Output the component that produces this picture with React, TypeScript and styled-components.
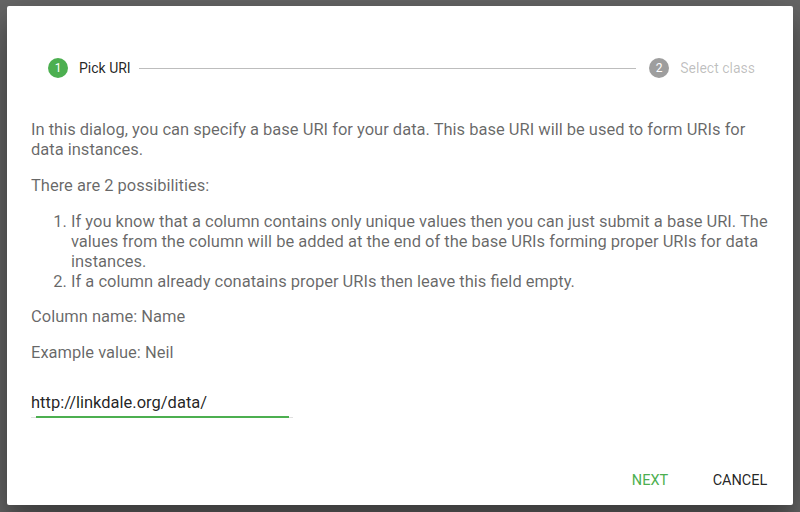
import { useEffect, useRef } from "react";
import styled, { createGlobalStyle } from "styled-components";

const GlobalStyle = createGlobalStyle`
  body {
    margin: 0;
    font-family: Roboto, "Liberation Sans", sans-serif;
  }
`;

const Backdrop = styled.div`
  width: 800px;
  height: 512px;
  box-sizing: border-box;
  padding: 6px 7px 0;
  background: #666666;
  overflow: hidden;
`;

const StyledDialog = styled.div`
  width: 786px;
  background: #ffffff;
  border-radius: 2px;
  box-shadow: 0 19px 60px rgba(0, 0, 0, 0.3), 0 15px 20px rgba(0, 0, 0, 0.22);
`;

const Body = styled.div`
  padding: 26px 24px 26px;
  font-size: 16.5px;
  line-height: 20px;
  color: rgba(0, 0, 0, 0.6);

  p {
    margin: 16px 0;
  }

  ol {
    margin: 15px 0;
    padding-left: 40px;
  }

  li:last-child {
    line-height: 19px;
  }
`;

const Stepper = styled.div`
  display: flex;
  align-items: center;
  height: 72px;
`;

const Step = styled.div`
  display: flex;
  align-items: center;
  padding: 0 14px 0 15px;
  font-size: 14px;
`;

const StepLabel = styled.span<{ $active: boolean }>`
  padding-left: 9px;
  color: ${(p) => (p.$active ? "rgba(0, 0, 0, 0.87)" : "rgba(0, 0, 0, 0.26)")};
`;

const Connector = styled.div`
  flex: 1;
  margin: 0 -4px 0 -6px;
  border-top: 1px solid #bdbdbd;
`;

const Field = styled.div`
  position: relative;
  width: 262px;
  height: 46px;
`;

const Input = styled.input`
  width: 100%;
  height: 100%;
  box-sizing: border-box;
  padding: 0;
  border: 0;
  outline: none;
  background: transparent;
  font-family: inherit;
  font-size: 16.5px;
  color: rgba(0, 0, 0, 0.87);
  caret-color: #000;
`;

const Underline = styled.hr`
  position: absolute;
  left: 0;
  right: 0;
  bottom: 7px;
  margin: 0;
  border: 0;
  border-bottom: 1px solid #e0e0e0;
`;

const FocusLine = styled.hr`
  position: absolute;
  left: 5px;
  right: 4px;
  bottom: 7px;
  margin: 0;
  border: 0;
  border-bottom: 2px solid #4caf50;
`;

const Actions = styled.div`
  display: flex;
  justify-content: flex-end;
  gap: 2px;
  padding: 11px 9px 7px;
`;

const FlatButton = styled.button<{ $primary?: boolean }>`
  height: 36px;
  min-width: 88px;
  padding: 0 16px;
  border: 0;
  border-radius: 2px;
  background: transparent;
  font-family: inherit;
  font-size: 14.5px;
  font-weight: 400;
  text-transform: uppercase;
  color: ${(p) => (p.$primary ? "#4caf50" : "rgba(0, 0, 0, 0.87)")};
`;

function StepIcon({ n, color }: { n: number; color: string }) {
  return (
    <svg width="24" height="24" viewBox="0 0 24 24">
      <circle cx="12" cy="12" r="10" fill={color} />
      <text
        x="12"
        y="16"
        textAnchor="middle"
        fontSize="12"
        fill="#fff"
        fontFamily="Roboto, sans-serif"
      >
        {n}
      </text>
    </svg>
  );
}

export default function App() {
  const inputRef = useRef<HTMLInputElement>(null);

  useEffect(() => {
    const el = inputRef.current;
    if (el) {
      el.focus();
      el.setSelectionRange(el.value.length, el.value.length);
    }
  }, []);

  return (
    <>
      <GlobalStyle />
      <Backdrop>
        <StyledDialog>
          <Body>
            <Stepper>
              <Step>
                <StepIcon n={1} color="#4caf50" />
                <StepLabel $active>Pick URI</StepLabel>
              </Step>
              <Connector />
              <Step>
                <StepIcon n={2} color="#9e9e9e" />
                <StepLabel $active={false}>Select class</StepLabel>
              </Step>
            </Stepper>
            <p>
              In this dialog, you can specify a base URI for your data. This
              base URI will be used to form URIs for data instances.
            </p>
            <p>There are 2 possibilities:</p>
            <ol>
              <li>
                If you know that a column contains only unique values then you
                can just submit a base URI. The values from the column will be
                added at the end of the base URIs forming proper URIs for data
                instances.
              </li>
              <li>
                If a column already conatains proper URIs then leave this field
                empty.
              </li>
            </ol>
            <p>Column name: Name</p>
            <p>Example value: Neil</p>
            <Field>
              <Input ref={inputRef} defaultValue="http://linkdale.org/data/" />
              <Underline />
              <FocusLine />
            </Field>
          </Body>
          <Actions>
            <FlatButton $primary>Next</FlatButton>
            <FlatButton>Cancel</FlatButton>
          </Actions>
        </StyledDialog>
      </Backdrop>
    </>
  );
}
